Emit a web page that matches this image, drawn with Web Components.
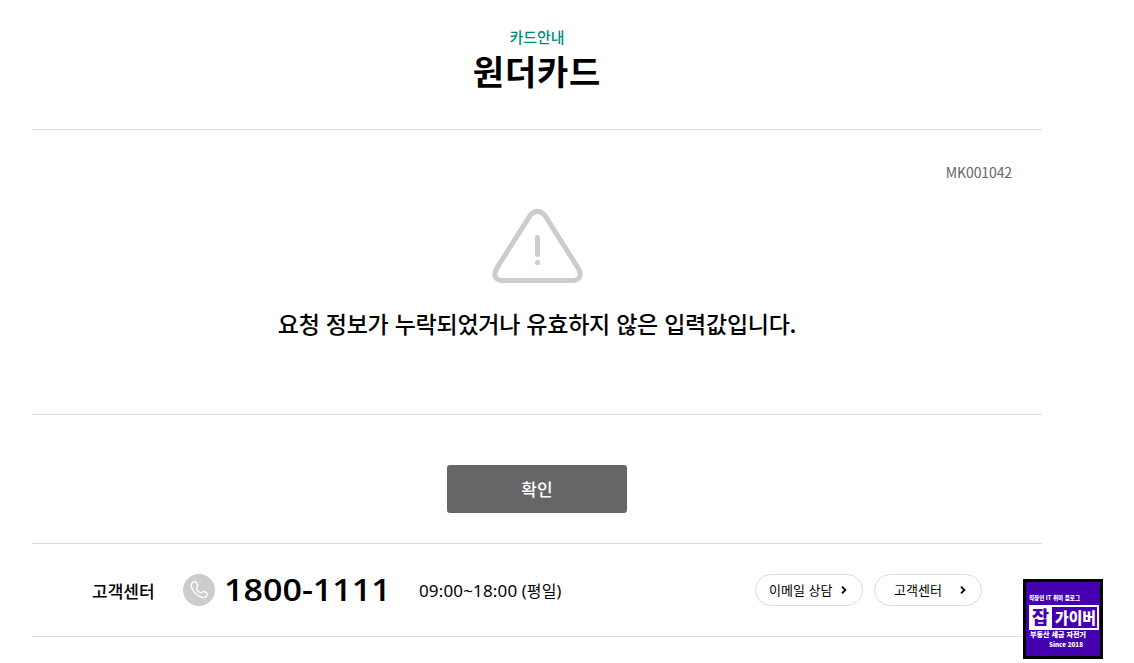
<!DOCTYPE html>
<html lang="ko">
<head>
<meta charset="utf-8">
<title>원더카드</title>
<style>
  body {
    margin: 0;
    height: 663px;
    overflow: hidden;
    background: #fff;
    color: #000;
    font-family: "Noto Sans CJK KR", sans-serif;
  }
</style>
</head>
<body>
<card-page>
  <page-title slot="title" category="카드안내">원더카드</page-title>
  <error-notice code="MK001042">요청 정보가 누락되었거나 유효하지 않은 입력값입니다.</error-notice>
  <confirm-button slot="action">확인</confirm-button>
  <customer-center slot="footer" phone="1800-1111" days="(평일)">
    09:00~18:00
    <pill-link slot="links">이메일 상담</pill-link>
    <pill-link slot="links" wide>고객센터</pill-link>
  </customer-center>
</card-page>
<blog-badge></blog-badge>

<script>
class BaseElement extends HTMLElement {
  constructor() {
    super();
    this.attachShadow({ mode: "open" });
  }

  connectedCallback() {
    this.shadowRoot.innerHTML = this.render();
  }
}

class CardPage extends BaseElement {
  render() {
    return `
      <style>
        :host {
          display: block;
          width: 1010px;
          margin-left: 32px;
        }
        header, main, .action, footer {
          box-sizing: border-box;
          border-bottom: 1px solid #ddd;
        }
        header { height: 130px; }
        main { height: 285px; }
        .action { height: 129px; padding-top: 50px; }
        footer { height: 93px; }
      </style>
      <header><slot name="title"></slot></header>
      <main><slot></slot></main>
      <div class="action"><slot name="action"></slot></div>
      <footer><slot name="footer"></slot></footer>
    `;
  }
}

class PageTitle extends BaseElement {
  render() {
    return `
      <style>
        :host {
          display: block;
          padding-top: 27px;
          text-align: center;
        }
        p {
          margin: 0;
          color: #008c7b;
          font-size: 15px;
          font-weight: 500;
          line-height: 20px;
        }
        h1 {
          margin: 0;
          font-size: 34px;
          font-weight: 700;
          letter-spacing: 0.8px;
          line-height: 48px;
        }
      </style>
      <p>${this.getAttribute("category")}</p>
      <h1><slot></slot></h1>
    `;
  }
}

class ErrorNotice extends BaseElement {
  render() {
    return `
      <style>
        :host {
          display: flex;
          flex-direction: column;
          align-items: center;
          padding: 32px 30px 0;
        }
        .code {
          align-self: flex-end;
          color: #666;
          font-size: 14px;
          letter-spacing: -0.1px;
          line-height: 20px;
        }
        svg {
          display: block;
          margin-top: 26px;
        }
        p {
          margin: 22px 0 0;
          font-size: 23px;
          font-weight: 500;
          letter-spacing: -0.25px;
          line-height: 34px;
          white-space: nowrap;
        }
      </style>
      <span class="code">${this.getAttribute("code")}</span>
      <svg width="92" height="76" viewBox="0 0 92 76" fill="none" stroke="#ccc" stroke-width="5" stroke-linecap="round">
        <path d="M39.5 6.800Q46.500 -0.200 53.500 6.800L87.400 60.500Q92.500 70.500 83 72.500H10Q0.500 70.500 5.600 60.500Z" stroke-linejoin="round"/>
        <path d="M46.500 29.500V46.500"/>
        <circle cx="46.500" cy="54.500" r="2.600" fill="#ccc" stroke="none"/>
      </svg>
      <p><slot></slot></p>
    `;
  }
}

class ConfirmButton extends BaseElement {
  render() {
    return `
      <style>
        :host {
          display: flex;
          justify-content: center;
        }
        button {
          width: 180px;
          height: 48px;
          padding: 0;
          border: 0;
          border-radius: 3px;
          background: #666;
          color: #fff;
          font: 500 17px/48px "Noto Sans CJK KR", sans-serif;
        }
      </style>
      <button type="button"><slot></slot></button>
    `;
  }
}

class CustomerCenter extends BaseElement {
  render() {
    return `
      <style>
        :host {
          display: flex;
          align-items: center;
          height: 92px;
          padding: 0 60px;
        }
        .name {
          width: 91px;
          font-size: 17px;
          font-weight: 500;
        }
        .phone {
          width: 195px;
          margin-left: 9px;
          font: 600 30px/40px "Open Sans", sans-serif;
        }
        .phone b {
          display: inline-block;
          font-weight: inherit;
          transform: scaleX(1.135);
          transform-origin: left;
        }
        .hours {
          padding-top: 2px;
          font: 17px/24px "Noto Sans", "Noto Sans CJK KR", sans-serif;
          letter-spacing: 0.15px;
          white-space: nowrap;
        }
        .hours small { font-size: 16px; }
        .links {
          display: flex;
          gap: 11px;
          margin-left: auto;
        }
      </style>
      <span class="name">고객센터</span>
      <svg width="32" height="32" viewBox="0 0 32 32" fill="none">
        <circle cx="16" cy="16" r="16" fill="#ccc"/>
        <path d="M9.300 8.800L11 7.700Q12.300 7.200 13.200 8.500L14.600 10.600Q15.300 11.900 14.200 12.800Q12.900 13.800 13.800 15.300Q15 17.300 16.900 18.400Q18.300 19.300 19.300 18.100Q20.200 17 21.500 17.700L23.700 19.100Q25 20 24.200 21.300Q22.500 24 19.300 23.500Q15.500 22.700 12 18.900Q8.800 15.500 8.300 12.300Q8 9.900 9.300 8.800Z" stroke="#fff" stroke-width="1.400" stroke-linejoin="round"/>
      </svg>
      <span class="phone"><b>${this.getAttribute("phone")}</b></span>
      <span class="hours"><slot></slot><small>${this.getAttribute("days")}</small></span>
      <div class="links"><slot name="links"></slot></div>
    `;
  }
}

class PillLink extends BaseElement {
  render() {
    return `
      <style>
        :host {
          display: flex;
          box-sizing: border-box;
          align-items: center;
          justify-content: space-between;
          width: 108px;
          height: 32px;
          padding: 0 15px 0 13px;
          border: 1px solid #ddd;
          border-radius: 16px;
          font: 13px/30px "Noto Sans CJK KR", sans-serif;
          letter-spacing: 0;
          white-space: nowrap;
        }
        :host([wide]) { padding-left: 19px; }
      </style>
      <slot></slot>
      <svg width="6" height="8" viewBox="0 0 6 8" fill="none" stroke="#000" stroke-width="1.800">
        <path d="M1 0.700L4.400 4L1 7.300"/>
      </svg>
    `;
  }
}

// Blog logo pinned over the bottom right corner
class BlogBadge extends BaseElement {
  render() {
    return `
      <style>
        :host {
          position: absolute;
          left: 1023px;
          top: 579px;
        }
        svg { display: block; }
        text {
          fill: #fff;
          font-family: "Noto Sans CJK KR", sans-serif;
          font-weight: 900;
        }
      </style>
      <svg width="80" height="80" viewBox="0 0 80 80">
        <rect width="80" height="80" fill="#000"/>
        <rect x="3" y="3" width="74" height="74" fill="#4400ad"/>
        <text x="6" y="21" font-size="6" textLength="51" lengthAdjust="spacingAndGlyphs">직장인 IT 취미 블로그</text>
        <rect x="6" y="26" width="70" height="25" fill="#fff"/>
        <rect x="29" y="28" width="45" height="21" fill="#4400ad"/>
        <text x="9" y="45" font-size="18" textLength="17" lengthAdjust="spacingAndGlyphs" style="fill:#4400ad">잡</text>
        <text x="32" y="45" font-size="16" textLength="41" lengthAdjust="spacingAndGlyphs">가이버</text>
        <text x="7" y="58" font-size="7" textLength="56" lengthAdjust="spacingAndGlyphs">부동산 세금 자전거</text>
        <text x="26" y="68" font-size="6.500" textLength="34" lengthAdjust="spacingAndGlyphs">Since 2018</text>
      </svg>
    `;
  }
}

customElements.define("card-page", CardPage);
customElements.define("page-title", PageTitle);
customElements.define("error-notice", ErrorNotice);
customElements.define("confirm-button", ConfirmButton);
customElements.define("customer-center", CustomerCenter);
customElements.define("pill-link", PillLink);
customElements.define("blog-badge", BlogBadge);
</script>
</body>
</html>
